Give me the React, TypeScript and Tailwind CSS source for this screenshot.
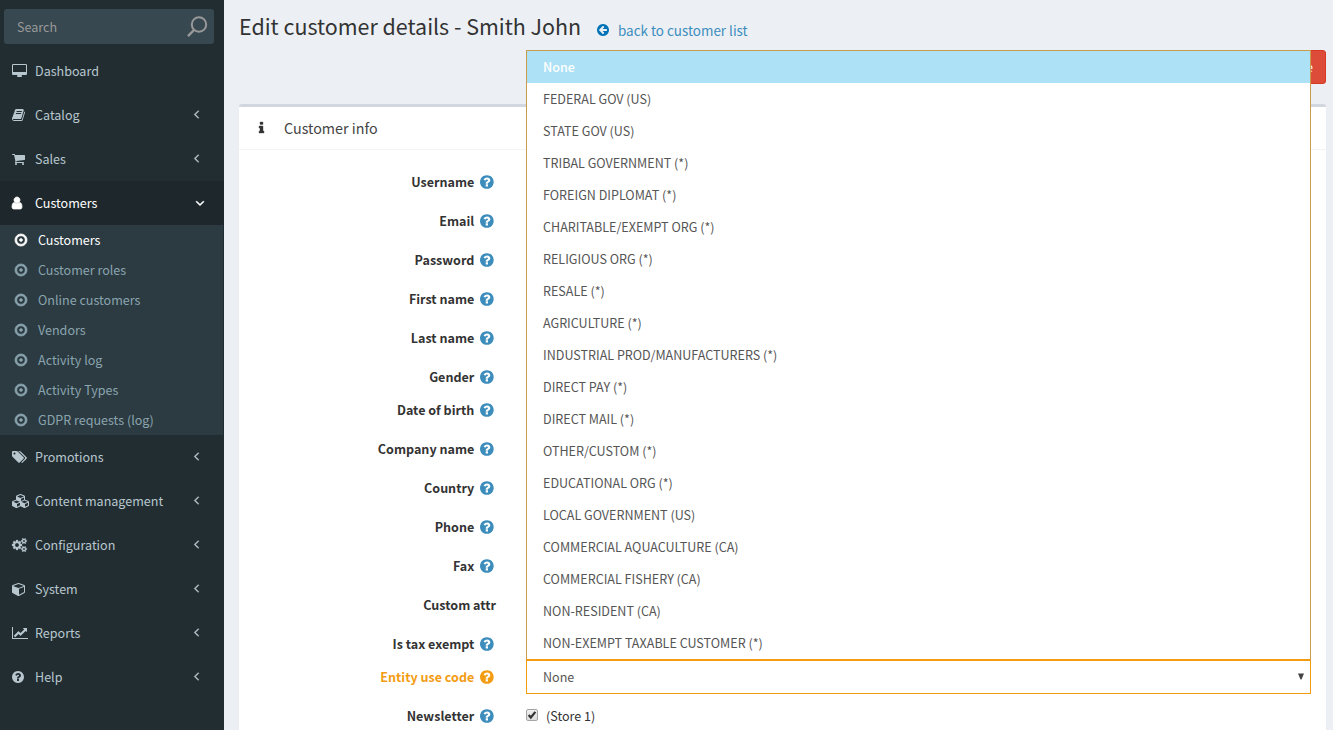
import React from "react";

const RING =
  "m0 0q0 209-103 385.5t-279.5 279.5-385.5 103-385.5-103-279.5-279.5-103-385.5 103-385.5 279.5-279.5 385.5-103 385.5 103 279.5 279.5 103 385.5z";

const SMALL_COG =
  "q0 16-149 31-12 27-30 52 51 113 51 138 0 4-4 7-122 71-124 71-8 0-46-47t-52-68q-20 2-30 2t-30-2q-14 21-52 68t-46 47q-2 0-124-71-4-3-4-7 0-25 51-138-18-25-30-52-149-15-149-31v-140q0-16 149-31 13-29 30-52-51-113-51-138 0-4 4-7 4-2 35-20t59-34 30-16q8 0 46 46.5t52 67.5q20-2 30-2t30 2q51-71 92-112l6-2q4 0 124 70 4 3 4 7 0 25-51 138 17 23 30 52 149 15 149 31z";

// Each glyph: [left edge, width, path] on a 1792-unit high grid.
const glyphs: Record<string, [number, number, string]> = {
  desktop: [0, 1920, "M1792 992v-832q0-13-9.500-22.500t-22.500-9.500h-1600q-13 0-22.500 9.500t-9.500 22.500v832q0 13 9.500 22.500t22.500 9.500h1600q13 0 22.500-9.500t9.500-22.500zm128-832v1088q0 66-47 113t-113 47h-544q0 37 16 77.500t32 71 16 43.500q0 26-19 45t-45 19h-512q-26 0-45-19t-19-45q0-14 16-44t32-70 16-78h-544q-66 0-113-47t-47-113v-1088q0-66 47-113t113-47h1600q66 0 113 47t47 113z"],
  book: [64, 1664, "M1703 478q40 57 18 129l-275 906q-19 64-76.500 107.500t-122.500 43.500h-923q-77 0-148.500-53.500t-99.500-131.500q-24-67-2-127 0-4 3-27t4-37q1-8-3-21.500t-3-19.500q2-11 8-21t16.500-23.500 16.500-23.500q23-38 45-91.500t30-91.500q3-10 .5-30t-.5-28q3-11 17-28t17-23q21-36 42-92t25-90q1-9-2.500-32t.5-28q4-13 22-30.500t22-22.500q19-26 42.500-84.500t27.500-96.500q1-8-3-25.500t-2-26.500q2-8 9-18t18-23 17-21q8-12 16.500-30.500t15-35 16-36 19.500-32 26.500-23.500 36-11.500 47.500 5.500l-1 3q38-9 51-9h761q74 0 114 56t18 130l-274 906q-36 119-71.500 153.500t-128.500 34.500h-869q-27 0-38 15-11 16-1 43 24 70 144 70h923q29 0 56-15.500t35-41.500l300-987q7-22 5-57 38 15 59 43zm-1064 2q-4 13 2 22.500t20 9.500h608q13 0 25.500-9.500t16.500-22.500l21-64q4-13-2-22.500t-20-9.500h-608q-13 0-25.500 9.500t-16.500 22.500zm-83 256q-4 13 2 22.500t20 9.500h608q13 0 25.500-9.500t16.500-22.500l21-64q4-13-2-22.500t-20-9.500h-608q-13 0-25.500 9.500t-16.500 22.500z"],
  cart: [64, 1664, "M704 1536q0 52-38 90t-90 38-90-38-38-90 38-90 90-38 90 38 38 90zm896 0q0 52-38 90t-90 38-90-38-38-90 38-90 90-38 90 38 38 90zm128-1088v512q0 24-16.500 42.500t-40.500 21.500l-1044 122q13 60 13 70 0 16-24 64h920q26 0 45 19t19 45-19 45-45 19h-1024q-26 0-45-19t-19-45q0-11 8-31.500t16-36 21.500-40 15.500-29.500l-177-823h-204q-26 0-45-19t-19-45 19-45 45-19h256q16 0 28.500 6.500t19.500 15.500 13 24.500 8 26 5.500 29.500 4.500 26h1201q26 0 45 19t19 45z"],
  user: [256, 1280, "M1536 1399q0 109-62.500 187t-150.500 78h-854q-88 0-150.500-78t-62.500-187q0-85 8.500-160.500t31.500-152 58.500-131 94-89 134.500-34.500q131 128 313 128t313-128q76 0 134.500 34.500t94 89 58.500 131 31.500 152 8.500 160.500zm-256-887q0 159-112.500 271.500t-271.500 112.500-271.500-112.500-112.500-271.500 112.500-271.500 271.500-112.500 271.500 112.500 112.500 271.500z"],
  tags: [0, 1920, "M448 448q0-53-37.500-90.500t-90.500-37.500-90.500 37.500-37.500 90.500 37.500 90.500 90.500 37.500 90.500-37.500 37.500-90.500zm1067 576q0 53-37 90l-491 492q-39 37-91 37-53 0-90-37l-715-716q-38-37-64.500-101t-26.500-117v-416q0-52 38-90t90-38h416q53 0 117 26.500t102 64.500l715 714q37 39 37 91zm384 0q0 53-37 90l-491 492q-39 37-91 37-36 0-59-14t-53-45l470-470q37-37 37-90 0-52-37-91l-715-714q-38-38-102-64.500t-117-26.500h224q53 0 117 26.500t102 64.500l715 714q37 39 37 91z"],
  cubes: [0, 2304, "M640 1632l384-192v-314l-384 164v342zm-64-454l404-173-404-173-404 173zm1088 454l384-192v-314l-384 164v342zm-64-454l404-173-404-173-404 173zm-448-293l384-165v-266l-384 164v267zm-64-379l441-189-441-189-441 189zm1088 518v416q0 36-19 67t-52 47l-448 224q-25 14-57 14t-57-14l-448-224q-4-2-7-4-2 2-7 4l-448 224q-25 14-57 14t-57-14l-448-224q-33-16-52-47t-19-67v-416q0-38 21.500-70t56.500-48l434-186v-400q0-38 21.500-70t56.500-48l448-192q23-10 50-10t50 10l448 192q35 16 56.500 48t21.500 70v400l434 186q36 16 57 48t21 70z"],
  cogs: [0, 1920, "M896 896q0-106-75-181t-181-75-181 75-75 181 75 181 181 75 181-75 75-181zm768 512q0-52-38-90t-90-38-90 38-38 90q0 53 37.500 90.500t90.500 37.500 90.500-37.500 37.500-90.500zm0-1024q0-52-38-90t-90-38-90 38-38 90q0 53 37.500 90.500t90.500 37.500 90.500-37.500 37.500-90.500zm-384 421v185q0 10-7 19.500t-16 10.500l-155 24q-11 35-32 76 34 48 90 115 7 11 7 20 0 12-7 19-23 30-82.500 89.500t-78.500 59.500q-11 0-21-7l-115-90q-37 19-77 31-11 108-23 155-7 24-30 24h-186q-11 0-20-7.500t-10-17.500l-23-153q-34-10-75-31l-118 89q-7 7-20 7-11 0-21-8-144-133-144-160 0-9 7-19 10-14 41-53t47-61q-23-44-35-82l-152-24q-10-1-17-9.500t-7-19.500v-185q0-10 7-19.500t16-10.500l155-24q11-35 32-76-34-48-90-115-7-11-7-20 0-12 7-20 22-30 82-89t79-59q11 0 21 7l115 90q34-18 77-32 11-108 23-154 7-24 30-24h186q11 0 20 7.500t10 17.500l23 153q34 10 75 31l118-89q8-7 20-7 11 0 21 8 144 133 144 160 0 8-7 19-12 16-42 54t-45 60q23 48 34 82l152 23q10 2 17 10.500t7 19.500zM1920 1338v140" + SMALL_COG + "M1920 314v140" + SMALL_COG],
  cube: [0, 1664, "M896 1629l640-349v-636l-640 233v752zm-64-865l698-254-698-254-698 254zm832-252v768q0 35-18 65t-49 47l-704 384q-28 16-61 16t-61-16l-704-384q-31-17-49-47t-18-65v-768q0-40 23-73t61-47l704-256q22-8 44-8t44 8l704 256q38 14 61 47t23 73z"],
  chart: [0, 2048, "M2048 1536v128h-2048v-1536h128v1408h1920zm-128-1248v435q0 21-19.500 29.500t-35.500-7.500l-121-121-633 633q-10 10-23 10t-23-10l-233-233-416 416-192-192 585-585q10-10 23-10t23 10l233 233 464-464-121-121q-16-16-7.500-35.500t29.500-19.500h435q14 0 23 9t9 23z"],
  question: [128, 1536, "M1024 1376v-192q0-14-9-23t-23-9h-192q-14 0-23 9t-9 23v192q0 14 9 23t23 9h192q14 0 23-9t9-23zm256-672q0-88-55.500-163t-138.500-116-170-41q-243 0-371 213-15 24 8 42l132 100q7 6 19 6 16 0 25-12 53-68 86-92 34-24 86-24 48 0 85.500 26t37.500 59q0 38-20 61t-68 45q-63 28-115.500 86.500t-52.500 125.500v36q0 14 9 23t23 9h192q14 0 23-9t9-23q0-19 21.500-49.500t54.500-49.500q32-18 49-28.500t46-35 44.500-48 28-60.500 12.500-81zM1664 896" + RING],
  dot: [128, 1536, "M1088 896q0 80-56 136t-136 56-136-56-56-136 56-136 136-56 136 56 56 136zm-192-544q-148 0-273 73t-198 198-73 273 73 273 198 198 273 73 273-73 198-198 73-273-73-273-198-198-273-73zM1664 896" + RING],
  back: [128, 1536, "M1408 960v-128q0-26-19-45t-45-19h-502l189-189q19-19 19-45t-19-45l-91-91q-18-18-45-18t-45 18l-362 362-91 91q-18 18-18 45t18 45l91 91 362 362q18 18 45 18t45-18l91-91q18-18 18-45t-18-45l-189-189h502q26 0 45-19t19-45zM1664 896" + RING],
  left: [589, 640, "M1203 544q0 13-10 23l-393 393 393 393q10 10 10 23t-10 23l-50 50q-10 10-23 10t-23-10l-466-466q-10-10-10-23t10-23l466-466q10-10 23-10t23 10l50 50q10 10 10 23z"],
  down: [384, 1024, "M1395 736q0 13-10 23l-466 466q-10 10-23 10t-23-10l-466-466q-10-10-10-23t10-23l50-50q10-10 23-10t23 10l393 393 393-393q10-10 23-10t23 10l50 50q10 10 10 23z"],
  info: [576, 640, "M1216 1344v128q0 26-19 45t-45 19h-512q-26 0-45-19t-19-45v-128q0-26 19-45t45-19h64v-384h-64q-26 0-45-19t-19-45v-128q0-26 19-45t45-19h384q26 0 45 19t19 45v576h64q26 0 45 19t19 45zm-128-1152v192q0 26-19 45t-45 19h-256q-26 0-45-19t-19-45v-192q0-26 19-45t45-19h256q26 0 45 19t19 45z"],
};

// Extra outline weight, in glyph units, for the thin-lined glyphs.
const weights: Record<string, number> = { dot: 90, left: 50, down: 80, user: 90, info: 50, cogs: 30 };

function Glyph({ name, size = 14, className = "" }: { name: string; size?: number; className?: string }) {
  const [x, w, d] = glyphs[name];
  return (
    <svg
      viewBox={`${x} 0 ${w} 1792`}
      width={(w / 1792) * size}
      height={size}
      fill="currentColor"
      stroke="currentColor"
      strokeWidth={weights[name] ?? 0}
      className={`shrink-0 overflow-visible ${className}`}
    >
      <path d={d} />
    </svg>
  );
}

function NavItem({ icon, label, arrow = true, active = false }: { icon: string; label: string; arrow?: boolean; active?: boolean }) {
  return (
    <a className={`flex h-11 items-center pl-3 ${active ? "bg-[#1e282c] text-white" : ""}`}>
      <span className="flex w-[23px] shrink-0">
        <Glyph name={icon} />
      </span>
      <span className="flex-1 whitespace-nowrap">{label}</span>
      {arrow && (
        <span className={`flex w-[30px] shrink-0 ${active ? "" : "pb-[2px]"}`}>
          <Glyph name={active ? "down" : "left"} className={active ? "ml-[2px]" : ""} />
        </span>
      )}
    </a>
  );
}

const subItems = ["Customers", "Customer roles", "Online customers", "Vendors", "Activity log", "Activity Types", "GDPR requests (log)"];

const fields: { label: string; short?: boolean; noHelp?: boolean }[] = [
  { label: "Username" },
  { label: "Email" },
  { label: "Password" },
  { label: "First name" },
  { label: "Last name" },
  { label: "Gender", short: true },
  { label: "Date of birth" },
  { label: "Company name" },
  { label: "Country" },
  { label: "Phone" },
  { label: "Fax" },
  { label: "Custom attr", noHelp: true },
  { label: "Is tax exempt", short: true },
];

const options = [
  "None",
  "FEDERAL GOV (US)",
  "STATE GOV (US)",
  "TRIBAL GOVERNMENT (*)",
  "FOREIGN DIPLOMAT (*)",
  "CHARITABLE/EXEMPT ORG (*)",
  "RELIGIOUS ORG (*)",
  "RESALE (*)",
  "AGRICULTURE (*)",
  "INDUSTRIAL PROD/MANUFACTURERS (*)",
  "DIRECT PAY (*)",
  "DIRECT MAIL (*)",
  "OTHER/CUSTOM (*)",
  "EDUCATIONAL ORG (*)",
  "LOCAL GOVERNMENT (US)",
  "COMMERCIAL AQUACULTURE (CA)",
  "COMMERCIAL FISHERY (CA)",
  "NON-RESIDENT (CA)",
  "NON-EXEMPT TAXABLE CUSTOMER (*)",
];

function FieldLabel({ label, noHelp = false, warn = false }: { label: string; noHelp?: boolean; warn?: boolean }) {
  return (
    <div
      className={`flex h-5 w-[257px] items-center justify-end gap-[6px] font-bold whitespace-nowrap ${noHelp ? "pr-0" : "pr-[2px]"} ${warn ? "text-[#f39c12]" : "text-[#333]"}`}
    >
      <span>{label}</span>
      {!noHelp && <Glyph name="question" size={16} className={warn ? "" : "text-[#3c8dbc]"} />}
    </div>
  );
}

export default function App() {
  return (
    <div className="flex h-[730px] w-[1333px] overflow-hidden bg-[#ecf0f5] font-['Noto_Sans_CJK_SC',sans-serif] text-[12.550px] leading-5">
      <aside className="flex w-56 shrink-0 flex-col bg-[#222d32] text-[#b8c7ce]">
        <div className="mt-[9px] mb-[5px] ml-1 flex h-[35px] w-[210px] items-center justify-between rounded-[3px] bg-[#374850] pr-[6px] pl-[13px] text-[#999]">
          <span>Search</span>
          <svg width="22" height="22" viewBox="0 0 22 22" fill="none" stroke="currentColor" strokeWidth="2">
            <circle cx="13" cy="8.500" r="7.200" />
            <path d="M8 14L2 20.200" strokeWidth="2.400" />
          </svg>
        </div>
        <NavItem icon="desktop" label="Dashboard" arrow={false} />
        <NavItem icon="book" label="Catalog" />
        <NavItem icon="cart" label="Sales" />
        <NavItem icon="user" label="Customers" active />
        <ul className="mr-px bg-[#2c3b41] text-[#8aa4af]">
          {subItems.map((item, i) => (
            <li key={item} className={`flex h-[30px] items-center gap-[11px] pl-[15px] whitespace-nowrap ${i === 0 ? "text-white" : ""}`}>
              <Glyph name="dot" />
              {item}
            </li>
          ))}
        </ul>
        <NavItem icon="tags" label="Promotions" />
        <NavItem icon="cubes" label="Content management" />
        <NavItem icon="cogs" label="Configuration" />
        <NavItem icon="cube" label="System" />
        <NavItem icon="chart" label="Reports" />
        <NavItem icon="question" label="Help" />
      </aside>

      <main className="flex flex-1 flex-col pr-[7px] pl-[15px]">
        <header className="flex h-[50px] shrink-0 items-start pt-3 whitespace-nowrap">
          <h1 className="w-[358px] text-[21.450px] leading-7 text-[#333]">Edit customer details - Smith John</h1>
          <a className="flex items-center gap-[9px] pt-2 text-[13.450px] text-[#3c8dbc]">
            <Glyph name="back" className="text-[#0073b7]" />
            back to customer list
          </a>
        </header>
        <div className="flex h-[54px] shrink-0 justify-end">
          <button className="flex h-[34px] items-center rounded-[3px] border border-[#d73925] bg-[#dd4b39] px-3 text-white">Delete</button>
        </div>
        <section className="h-[640px] shrink-0 rounded-t-[3px] border-t-[3px] border-[#d2d6de] bg-white shadow-[0_1px_1px_rgba(0,0,0,0.1)]">
          <h2 className="flex h-[43px] items-center border-b border-[#f4f4f4] pl-5 text-[14.300px] text-[#444]">
            <span className="flex w-[25px]">
              <Glyph name="info" className="text-[#333]" />
            </span>
            Customer info
          </h2>
          <div className="flex flex-col pt-[15px]">
            {fields.map((f) => (
              <div key={f.label} className={`pt-[7px] ${f.short ? "h-[33px]" : "h-[39px]"}`}>
                <FieldLabel label={f.label} noHelp={f.noHelp} />
              </div>
            ))}
            <div className="flex h-[39px] items-start">
              <div className="pt-[7px]">
                <FieldLabel label="Entity use code" warn />
              </div>
              <div className="relative ml-[30px] flex h-[34px] w-[785px] items-center justify-between border border-[#f39c12] bg-white pr-[5px] pl-4 text-[#555]">
                <span>None</span>
                <svg width="8" height="7" viewBox="0 0 8 7" className="mb-[2px]" fill="#444">
                  <path d="M1 .5h6L4.500 6.500h-1z" />
                </svg>
                <ul className="absolute bottom-[32px] -left-px w-[785px] border border-b-2 border-[#c99c4c] border-b-[#f39c12] bg-white">
                  {options.map((o, i) => (
                    <li
                      key={o}
                      className={`flex h-8 items-center pl-4 whitespace-nowrap ${i === 0 ? "bg-[#ace1f6] font-medium text-white" : ""}`}
                    >
                      {o}
                    </li>
                  ))}
                </ul>
              </div>
            </div>
            <div className="flex h-[39px] items-start pt-[7px] text-[#333]">
              <FieldLabel label="Newsletter" />
              <span className="mt-[3px] ml-[30px] flex h-3 w-3 items-center justify-center rounded-[2px] border border-[#a5a5a5] bg-gradient-to-b from-[#eee] to-[#ddd]">
                <svg width="10" height="10" viewBox="0 0 11 11" fill="none" stroke="#333" strokeWidth="2.400">
                  <path d="M1.800 5.500L4.200 8.200L9.200 2" />
                </svg>
              </span>
              <span className="ml-2">(Store 1)</span>
            </div>
          </div>
        </section>
      </main>
    </div>
  );
}
